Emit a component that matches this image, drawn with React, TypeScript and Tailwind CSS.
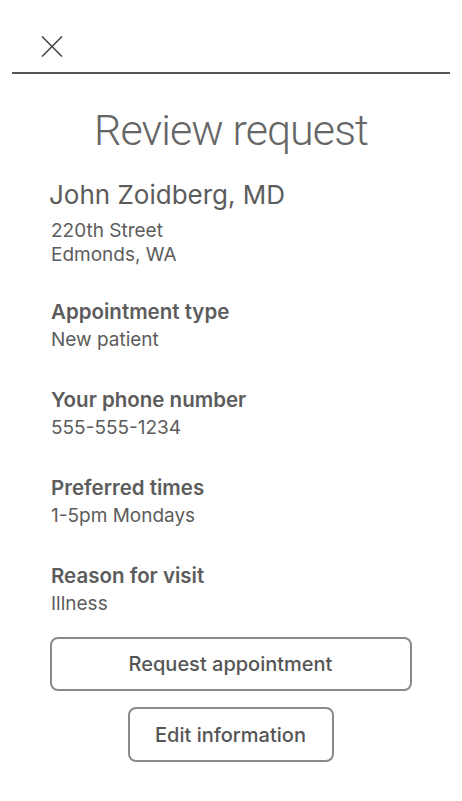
import React from "react";

function Field({ label, value }: { label: string; value: string }) {
  return (
    <div className="flex flex-col">
      <div className="text-[20.5px] leading-[28px] font-semibold text-[#5c5c5c]">{label}</div>
      <div className="text-[19px] leading-[28px] text-[#5c5c5c]">{value}</div>
    </div>
  );
}

export default function App() {
  return (
    <div
      className="w-[462px] h-[801px] bg-white text-[#5c5c5c] flex flex-col"
      style={{ fontFamily: "Inter, 'Noto Sans', 'Liberation Sans', sans-serif" }}
    >
      <div className="pt-[36px] pb-[15px] pl-[41px]">
        <svg width="22" height="21" viewBox="0 0 22 21" fill="none">
          <path d="M1 0.5L21 20.5M21 0.5L1 20.5" stroke="#4a4a4a" strokeWidth="1.6" />
        </svg>
      </div>
      <div className="mx-[12px] h-[2px] bg-[#555555]" />
      <h1
        className="mt-[30px] text-center text-[43px] leading-[52px] font-light tracking-[-0.9px] text-[#666666]"
        style={{ fontFamily: "Roboto, Inter, sans-serif" }}
      >
        Review request
      </h1>
      <div className="mt-[23px] pl-[49px] text-[26px] leading-[32px] text-[#5c5c5c]">
        John Zoidberg, MD
      </div>
      <div className="mt-[8px] pl-[51px] text-[19px] leading-[24px] text-[#5c5c5c]">
        <div>220th Street</div>
        <div>Edmonds, WA</div>
      </div>
      <div className="mt-[31px] pl-[51px] flex flex-col gap-[32px]">
        <Field label="Appointment type" value="New patient" />
        <Field label="Your phone number" value="555-555-1234" />
        <Field label="Preferred times" value="1-5pm Mondays" />
        <Field label="Reason for visit" value="Illness" />
      </div>
      <div className="mt-[19px] flex flex-col items-center gap-[16px]">
        <button className="w-[362px] h-[54px] ml-[-1px] rounded-[8px] border-2 border-[#8a8a8a] text-[20px] font-medium text-[#555555] bg-white">
          Request appointment
        </button>
        <button className="w-[206px] h-[55px] ml-[-1px] rounded-[8px] border-2 border-[#8a8a8a] text-[20px] font-medium text-[#555555] bg-white">
          Edit information
        </button>
      </div>
    </div>
  );
}
